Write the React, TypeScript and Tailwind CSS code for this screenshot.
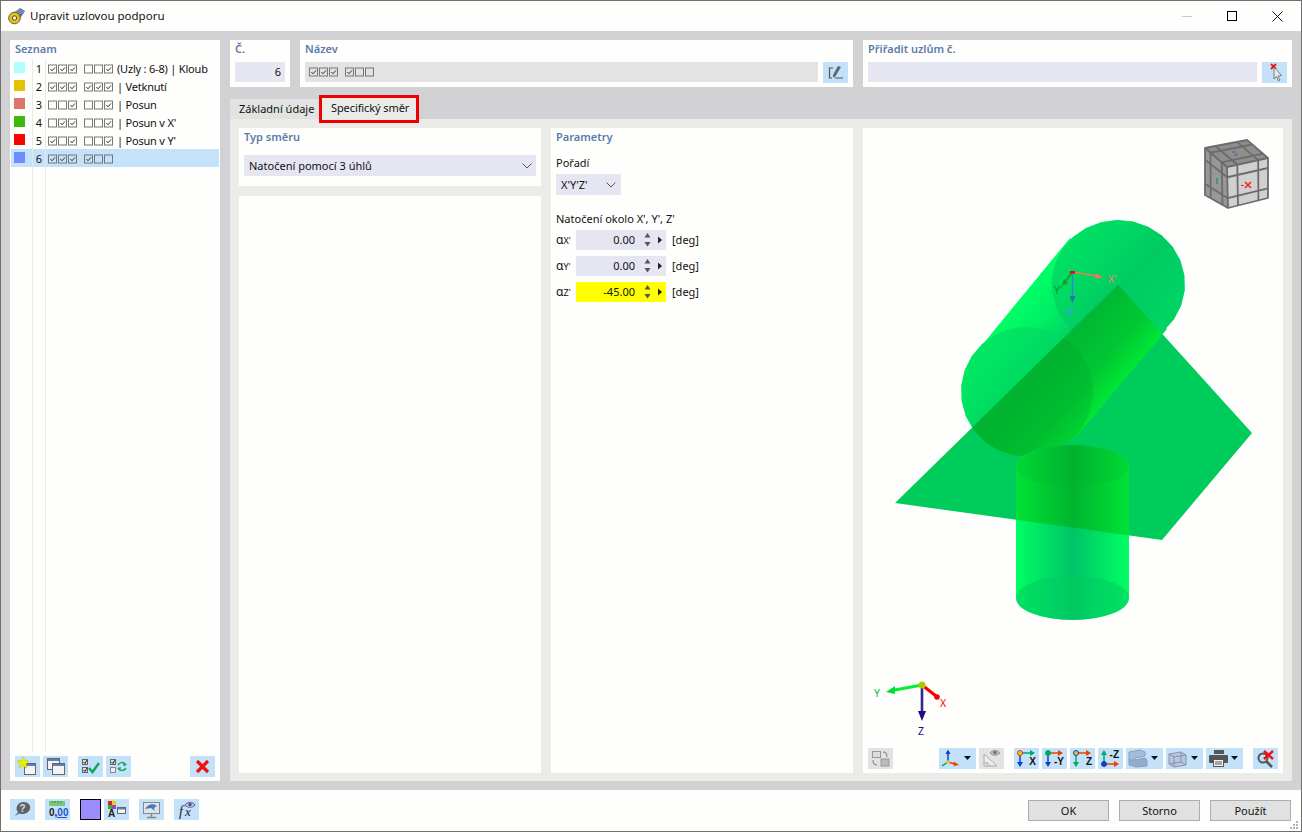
import type { ReactNode } from "react"

const rows = [
    { id: 1, color: "bg-[#b0ffff]", a: "111", b: "001", label: "(Uzly : 6-8) | Kloub" },
    { id: 2, color: "bg-[#e6c300]", a: "111", b: "111", label: "| Vetknutí" },
    { id: 3, color: "bg-[#de7568]", a: "001", b: "001", label: "| Posun" },
    { id: 4, color: "bg-[#3dba08]", a: "011", b: "001", label: "| Posun v X'" },
    { id: 5, color: "bg-[#ff0000]", a: "101", b: "001", label: "| Posun v Y'" },
    { id: 6, color: "bg-[#6d8cff]", a: "111", b: "100", label: "" },
]

const angles = [
    { axis: "X'", value: "0.00", bg: "bg-[#e6e6f2]" },
    { axis: "Y'", value: "0.00", bg: "bg-[#e6e6f2]" },
    { axis: "Z'", value: "-45.00", bg: "bg-[#ffff00]" },
]

type Pt = [number, number]

function ngon(cx: number, cy: number, rx: number, ry: number, n = 26) {
    const pts: string[] = []
    for (let i = 0; i < n; i++) {
        const a = (i / n) * Math.PI * 2 + 0.1
        pts.push(`${(cx + Math.cos(a) * rx).toFixed(1)},${(cy + Math.sin(a) * ry).toFixed(1)}`)
    }
    return pts.join(" ")
}

// grid lines of one view cube face
function faceGrid(p00: Pt, p10: Pt, p11: Pt, p01: Pt) {
    const lerp = (a: Pt, b: Pt, t: number): Pt => [a[0] + (b[0] - a[0]) * t, a[1] + (b[1] - a[1]) * t]
    let d = ""
    for (const t of [0.25, 0.76]) {
        const a = lerp(p00, p10, t), b = lerp(p01, p11, t), c = lerp(p00, p01, t), e = lerp(p10, p11, t)
        d += `M${a[0]} ${a[1]} L${b[0]} ${b[1]} M${c[0]} ${c[1]} L${e[0]} ${e[1]} `
    }
    return d
}

const farCap = ngon(1118.3, 284, 66.7, 64)
const nearCap = ngon(1027, 391.7, 66, 65)

function Box({ on }: { on: boolean }) {
    return (
        <svg width="10" height="10" viewBox="0 0 10 10" className="shrink-0">
            <rect x="0.5" y="1" width="8" height="8" fill="none" stroke="#777" />
            {on && <path d="M2.4 5 L4 6.8 L7 3.4" fill="none" stroke="#333" />}
        </svg>
    )
}

function Boxes({ bits }: { bits: string }) {
    return (
        <div className="flex">
            {bits.split("").map((b, i) => <Box key={i} on={b === "1"} />)}
        </div>
    )
}

function Btn({ children, gray, wide }: { children: ReactNode, gray?: boolean, wide?: boolean }) {
    return (
        <div className={`${wide ? "w-[37px]" : "w-[25px]"} h-[21px] shrink-0 flex items-center ${gray ? "bg-[#e3e3e3]" : "bg-[#c3e1f8]"}`}>
            <svg width="25" height="21" viewBox="0 0 25 21" className="shrink-0">{children}</svg>
            {wide && <svg width="12" height="21" viewBox="0 0 12 21" className="shrink-0"><path d="M0 8 H7 L3.500 12 Z" fill="#111" /></svg>}
        </div>
    )
}

function Win({ x, y, w, h }: { x: number, y: number, w: number, h: number }) {
    return (
        <g>
            <rect x={x + 0.5} y={y + 0.5} width={w} height={h} fill="#f4f4f4" stroke="#666" />
            <rect x={x + 1} y={y + 1} width={w - 1} height="2" fill="#5f7fb5" />
        </g>
    )
}

function AxisIcon({ label, dot, ring, right, down, up }: { label: string, dot: string, ring?: string, right: string, down?: string, up?: string }) {
    const y0 = up ? 16 : 5
    return (
        <g>
            <path d={`M6 ${y0} H17`} stroke={right} strokeWidth="1.5" />
            <path d={`M16 ${y0 - 3} L21 ${y0} L16 ${y0 + 3} Z`} fill={right} />
            {down && <path d="M6 5 V15" stroke={down} strokeWidth="1.5" />}
            {down && <path d="M3 14 L6 19 L9 14 Z" fill={down} />}
            {up && <path d="M6 16 V6" stroke={up} strokeWidth="1.5" />}
            {up && <path d="M3 7 L6 2 L9 7 Z" fill={up} />}
            <circle cx="6" cy={y0} r="2.500" fill={dot} stroke={ring ?? dot} />
            <text x={up ? 21 : 22} y={up ? 10 : 17} textAnchor="end" fontSize="10" fontWeight="700" fill="#111" fontFamily="Liberation Sans, sans-serif">{label}</text>
        </g>
    )
}

function Chevron() {
    return (
        <svg width="10" height="6" viewBox="0 0 10 6"><path d="M0.500 0.500 L5 5 L9.500 0.500" fill="none" stroke="#555" /></svg>
    )
}

function UpperCylinder({ fill }: { fill: string }) {
    return (
        <g fill={fill}>
            <polygon points="1070,238 969,361 1077,436 1167,329" />
            <polygon points={farCap} />
            <polygon points={nearCap} />
        </g>
    )
}

function Scene() {
    const lower = "M1016 466 V598 A56.500 22 0 0 0 1129 598 V466 A56.500 21 0 0 0 1016 466 Z"
    return (
        <svg viewBox="863 128 420 645" className="absolute inset-0 w-full h-full">
            <defs>
                <clipPath id="plate"><polygon points="1118,285 1252,433 1162,540 895,503" /></clipPath>
                <linearGradient id="up1" gradientUnits="userSpaceOnUse" x1="1021" y1="295" x2="1122" y2="381">
                    <stop offset="0" stopColor="#00ff66" />
                    <stop offset="0.25" stopColor="#00ee64" />
                    <stop offset="0.55" stopColor="#00ca64" />
                    <stop offset="0.8" stopColor="#00d864" />
                    <stop offset="1" stopColor="#00e066" />
                </linearGradient>
                <linearGradient id="up2" gradientUnits="userSpaceOnUse" x1="1021" y1="295" x2="1122" y2="381">
                    <stop offset="0" stopColor="#00c838" />
                    <stop offset="0.5" stopColor="#00b833" />
                    <stop offset="0.8" stopColor="#00c833" />
                    <stop offset="1" stopColor="#00e535" />
                </linearGradient>
                <linearGradient id="low1" gradientUnits="userSpaceOnUse" x1="1016" y1="0" x2="1129" y2="0">
                    <stop offset="0" stopColor="#00ff66" />
                    <stop offset="0.12" stopColor="#00f064" />
                    <stop offset="0.5" stopColor="#00c468" />
                    <stop offset="0.85" stopColor="#00ee64" />
                    <stop offset="1" stopColor="#00ff66" />
                </linearGradient>
                <linearGradient id="low2" gradientUnits="userSpaceOnUse" x1="1016" y1="0" x2="1129" y2="0">
                    <stop offset="0" stopColor="#00e236" />
                    <stop offset="0.5" stopColor="#00b52e" />
                    <stop offset="1" stopColor="#00e236" />
                </linearGradient>
            </defs>
            <UpperCylinder fill="url(#up1)" />
            <polygon points={farCap} fill="#00cc62" opacity="0.6" />
            <polygon points={nearCap} fill="#00d860" opacity="0.6" />
            <polygon points="1118,285 1252,433 1162,540 895,503" fill="#00cc5c" />
            <g clipPath="url(#plate)">
                <UpperCylinder fill="url(#up2)" />
                <polygon points={nearCap} fill="#00a428" opacity="0.3" />
            </g>
            <path d={lower} fill="url(#low1)" />
            <g clipPath="url(#plate)">
                <path d={lower} fill="url(#low2)" />
            </g>
            <ellipse cx="1072.500" cy="466" rx="56.500" ry="21" fill="#00a030" opacity="0.14" />
            <ellipse cx="1072.500" cy="598" rx="56.500" ry="22" fill="#00cc60" opacity="0.55" />

            <path d="M1072.500 272 L1098 276" stroke="#f07a5a" strokeWidth="1.500" />
            <path d="M1096 273.500 L1103 277 L1095 279 Z" fill="#f07a5a" />
            <path d="M1072.500 272 L1065 282" stroke="#18a018" strokeWidth="1.500" />
            <path d="M1062 286 L1064 279 L1068 283 Z" fill="#18a018" />
            <path d="M1072.500 272 V297" stroke="#2f86dd" strokeWidth="1.500" />
            <path d="M1069.500 296 H1075.500 L1072.500 303 Z" fill="#2f70b0" />
            <rect x="1070" y="271" width="5" height="2.500" fill="#ff0000" />
            <g fontFamily="Noto Sans, sans-serif" fontSize="10.500">
                <text x="1108" y="283" fill="#f08868">X'</text>
                <text x="1054" y="294" fill="#109030">Y'</text>
                <text x="1067" y="316" fill="#3aa0f0">Z'</text>
            </g>

            <polygon points="1205,148 1247,140 1268,158 1227,167" fill="#8e8e8e" />
            <polygon points="1205,148 1227,167 1228,208 1205,195" fill="#989898" />
            <polygon points="1227,167 1268,158 1268,198 1228,208" fill="#d0d0d0" />
            <g stroke="#6f6b6b" strokeWidth="1.800" fill="none" strokeLinejoin="round">
                <path d="M1205 148 L1247 140 L1268 158 L1268 198 L1228 208 L1205 195 Z M1205 148 L1227 167 L1268 158 M1227 167 L1228 208" />
                <path d={faceGrid([1205, 148], [1247, 140], [1268, 158], [1227, 167])} />
                <path d={faceGrid([1227, 167], [1268, 158], [1268, 198], [1228, 208])} />
                <path d={faceGrid([1205, 148], [1227, 167], [1228, 208], [1205, 195])} />
            </g>
            <path d="M1245 182 L1251 188 M1251 182 L1245 188" stroke="#f02a1a" strokeWidth="1.600" />
            <path d="M1241 185.500 H1244" stroke="#f02a1a" />
            <path d="M1217 178 V184" stroke="#20a050" strokeWidth="1.500" />
            <path d="M1232 152 H1236 M1234 155 H1238" stroke="#505a90" />

            <path d="M922 685 L892 690.500" stroke="#00ee33" strokeWidth="3" />
            <path d="M895 686 L886 692 L895 694 Z" fill="#00dd33" />
            <path d="M922 685 L936 696" stroke="#f00000" strokeWidth="3" />
            <circle cx="937" cy="697" r="2.800" fill="#f00000" />
            <path d="M922 685 V711" stroke="#7a7ab8" strokeWidth="3" />
            <path d="M922 685 V711" stroke="#1c0c88" strokeWidth="1.500" />
            <path d="M918 711 H926 L922 721 Z" fill="#1c0c88" />
            <circle cx="922" cy="685" r="3.500" fill="#b0c800" />
            <g fontFamily="Noto Sans, sans-serif" fontSize="10.500">
                <text x="874" y="697" fill="#00c040">Y</text>
                <text x="940" y="707" fill="#f00000">X</text>
                <text x="918" y="735" fill="#1c0c88">Z</text>
            </g>
        </svg>
    )
}

function App() {
    return (
        <div className="w-[1302px] h-[832px] flex flex-col bg-[#fefefc] border border-[#707070] text-[11px] leading-[16px] text-[#111] font-['Noto_Sans',sans-serif] overflow-hidden">
            {/* title bar */}
            <div className="h-[30px] flex items-center shrink-0 pl-[7px]">
                <svg width="18" height="18" viewBox="0 0 18 18">
                    <path d="M4 7 L12 1 L17 4 L13 10 Z" fill="#55709a" />
                    <path d="M6 6 L12 2 M8 7 L14 3 M10 8 L16 4" stroke="#b8c8dc" strokeWidth="0.700" />
                    <circle cx="6.500" cy="11" r="5.800" fill="#e6c02a" stroke="#6a5a20" />
                    <circle cx="6.500" cy="11" r="2.200" fill="#fff6c0" stroke="#5a4a10" />
                </svg>
                <span className="ml-[4px] text-[11.500px]">Upravit uzlovou podporu</span>
                <div className="ml-auto flex items-center">
                    <div className="w-[10px] h-px bg-[#c8c8c8] mr-[35px]" />
                    <div className="w-[10px] h-[10px] border border-black mr-[35px]" />
                    <svg width="11" height="11" viewBox="0 0 11 11" className="mr-[18px]"><path d="M0.500 0.500 L10.500 10.500 M10.500 0.500 L0.500 10.500" stroke="#111" /></svg>
                </div>
            </div>

            {/* main area */}
            <div className="flex-1 bg-[#d2d2d4] flex gap-[10px] pl-[9px] pr-[9px] pt-[9px] pb-[9px] min-h-0">
                {/* list */}
                <div className="w-[210px] bg-[#fefefc] flex flex-col">
                    <div className="h-[19px] pl-[5px] pt-[1px] font-semibold text-[#5b7bab]">Seznam</div>
                    {rows.map((r) => (
                        <div key={r.id} className={`h-[18px] flex items-center mx-px ${r.id === 6 ? "bg-[#c4e3fb]" : ""}`}>
                            <div className="w-[22px] h-full flex items-center pl-[3px] border-r border-[#e8e8e4]">
                                <div className={`w-[11px] h-[11px] -mt-px ${r.color}`} />
                            </div>
                            <div className="w-[13px] h-full flex items-center justify-end pr-[3px] pt-[2px] border-r border-[#e8e8e4]">{r.id}</div>
                            <div className="h-full flex items-center pl-[2px] pt-[2px]">
                                <Boxes bits={r.a} />
                                <div className="w-[6px]" />
                                <Boxes bits={r.b} />
                                <span className="ml-[3px] whitespace-nowrap tracking-[-0.2px]">{r.label}</span>
                            </div>
                        </div>
                    ))}
                    <div className="flex-1 flex mx-px">
                        <div className="w-[22px] border-r border-[#e8e8e4]" />
                        <div className="w-[13px] border-r border-[#e8e8e4]" />
                    </div>
                    <div className="h-[26px] shrink-0 flex pl-[5px] pt-[5px]">
                        <Btn>
                            <Win x={9} y={7} w={11} h={11} />
                            <polygon points="8,0.500 10,4.500 14,5 11,8 12,12 8,10 4,12 5,8 2,5 6,4.500" fill="#e6f000" stroke="#b8c020" strokeWidth="0.500" />
                        </Btn>
                        <div className="w-[3px]" />
                        <Btn>
                            <Win x={4} y={2} w={12} h={11} />
                            <Win x={9} y={7} w={12} h={11} />
                        </Btn>
                        <div className="w-[10px]" />
                        <Btn>
                            <rect x="4.500" y="3.500" width="5" height="5" fill="#ddd" stroke="#666" />
                            <rect x="4.500" y="11.500" width="5" height="5" fill="#ddd" stroke="#666" />
                            <path d="M5.500 6 L7 7.500 L9 4 M5.500 14 L7 15.500 L9 12" fill="none" stroke="#222" />
                            <path d="M11 12 L14.500 16 L21 7" fill="none" stroke="#10a860" strokeWidth="2.500" />
                        </Btn>
                        <div className="w-[3px]" />
                        <Btn>
                            <rect x="4.500" y="3.500" width="5" height="5" fill="#ddd" stroke="#666" />
                            <rect x="4.500" y="11.500" width="5" height="5" fill="#eee" stroke="#888" />
                            <path d="M5.500 6 L7 7.500 L9 4" fill="none" stroke="#222" />
                            <path d="M12 9 C14 6 17 6 19 8 M20 12 C18 15 15 15 13 13" fill="none" stroke="#10a860" strokeWidth="1.500" />
                            <path d="M18 6 L21 9 L17 10 Z M14 15 L11 12 L15 11 Z" fill="#10a860" />
                        </Btn>
                        <div className="w-[59px]" />
                        <Btn>
                            <path d="M7 5 L18 16 M18 5 L7 16" stroke="#f01010" strokeWidth="3.200" />
                        </Btn>
                    </div>
                    <div className="h-[4px] shrink-0" />
                </div>

                {/* right side */}
                <div className="flex-1 flex flex-col min-w-0">
                    <div className="h-[47px] shrink-0 flex gap-[10px]">
                        <div className="w-[60px] bg-[#fefefc] px-[5px] pt-[1px]">
                            <div className="h-[21px] font-semibold text-[#5b7bab]">Č.</div>
                            <div className="h-[20px] bg-[#e6e6f2] flex items-center justify-end pr-[4px]">6</div>
                        </div>
                        <div className="w-[553px] bg-[#fefefc] px-[5px] pt-[1px]">
                            <div className="h-[21px] font-semibold text-[#5b7bab]">Název</div>
                            <div className="flex gap-[5px]">
                                <div className="flex-1 h-[20px] bg-[#e3e3e3] flex items-center pl-[4px]">
                                    <Boxes bits="111" />
                                    <div className="w-[6px]" />
                                    <Boxes bits="100" />
                                </div>
                                <Btn>
                                    <path d="M10 6 H6.500 V16 H9 M12 16 H20" fill="none" stroke="#555" strokeWidth="1.200" />
                                    <path d="M15 4 L18 5 L12 15 L10 15.500 L10 13 Z" fill="#666" />
                                </Btn>
                            </div>
                        </div>
                        <div className="w-[429px] bg-[#fefefc] px-[5px] pt-[1px]">
                            <div className="h-[21px] font-semibold text-[#5b7bab]">Přiřadit uzlům č.</div>
                            <div className="flex gap-[5px]">
                                <div className="flex-1 h-[20px] bg-[#e6e6f2]" />
                                <Btn>
                                    <path d="M9 2 L14 7 M14 2 L9 7" stroke="#f01010" strokeWidth="1.800" />
                                    <path d="M12 5 V17 L14.500 14.500 L16.500 19 L18 18 L16 14 L19.500 13.500 Z" fill="#e8e8e8" stroke="#666" strokeWidth="0.800" />
                                </Btn>
                            </div>
                        </div>
                    </div>

                    {/* tabs */}
                    <div className="h-[22px] mt-[10px] shrink-0 flex items-end">
                        <div className="w-[89px] h-[20px] pl-[9px] bg-[#e2e2e2] flex items-center whitespace-nowrap">Základní údaje</div>
                        <div className="relative w-[100px] h-[22px] pl-[12px] bg-[#ebece8] flex items-center whitespace-nowrap tracking-[-0.1px]">
                            Specifický směr
                            <div className="absolute left-0 right-0 -top-[2px] -bottom-[4px] border-[3px] border-[#f20000]" />
                        </div>
                    </div>

                    <div className="flex-1 bg-[#ebece8] flex gap-[10px] p-[9px] pb-[8px] min-h-0">
                        <div className="w-[302px] flex flex-col gap-[10px]">
                            <div className="h-[58px] bg-[#fefefc] px-[5px] pt-px">
                                <div className="h-[26px] font-semibold text-[#5b7bab]">Typ směru</div>
                                <div className="h-[21px] bg-[#e6e6f2] flex items-center justify-between pl-[5px] pr-[4px]">
                                    <span>Natočení pomocí 3 úhlů</span>
                                    <Chevron />
                                </div>
                            </div>
                            <div className="flex-1 bg-[#fefefc]" />
                        </div>

                        <div className="w-[302px] bg-[#fefefc] px-[5px] pt-px flex flex-col">
                            <div className="h-[26px] font-semibold text-[#5b7bab]">Parametry</div>
                            <div className="h-[19px]">Pořadí</div>
                            <div className="w-[65px] h-[21px] bg-[#e6e6f2] flex items-center justify-between pl-[5px] pr-[5px]">
                                <span>X'Y'Z'</span>
                                <Chevron />
                            </div>
                            <div className="mt-[16px] h-[19px]">Natočení okolo X', Y', Z'</div>
                            <div className="flex flex-col gap-[6px]">
                                {angles.map((a) => (
                                    <div key={a.axis} className="h-[20px] flex items-center">
                                        <div className="w-[20px] flex items-baseline">
                                            <span className="text-[12px]">α</span><span className="text-[9px]">{a.axis}</span>
                                        </div>
                                        <div className={`w-[90px] h-full flex items-center justify-end ${a.bg}`}>
                                            <span>{a.value}</span>
                                            <svg width="31" height="20" viewBox="0 0 31 20" className="shrink-0">
                                                <path d="M9.500 7.500 L12.500 3 L15.500 7.500 Z M9.500 12 L12.500 16.500 L15.500 12 Z" fill="#555" />
                                                <path d="M23 6.500 L27 10 L23 13.500 Z" fill="#222" />
                                            </svg>
                                        </div>
                                        <span className="ml-[6px]">[deg]</span>
                                    </div>
                                ))}
                            </div>
                        </div>

                        <div className="relative flex-1 bg-[#fefefc] flex flex-col justify-end pb-[4px] pl-[5px] overflow-hidden">
                            <Scene />
                            <div className="relative flex items-center">
                                <Btn gray>
                                    <rect x="4.500" y="3.500" width="8" height="6" fill="#ddd" stroke="#999" />
                                    <rect x="13" y="11" width="8" height="7" fill="#bbb" stroke="#999" />
                                    <path d="M15 4 C18 4 19 6 19 9 M9 17 C6 17 5 15 5 12" fill="none" stroke="#999" strokeWidth="1.300" />
                                </Btn>
                                <div className="w-[46px]" />
                                <Btn wide>
                                    <path d="M9 15 L9 4" stroke="#1040c0" strokeWidth="1.500" />
                                    <path d="M6.500 6 L9 1.500 L11.500 6 Z" fill="#1040c0" />
                                    <path d="M9 14 L16 16" stroke="#f04000" strokeWidth="1.500" />
                                    <path d="M15 13.500 L20 17 L14.500 18 Z" fill="#f04000" />
                                    <path d="M9 14 L3 18" stroke="#00a060" strokeWidth="1.500" />
                                    <circle cx="9" cy="14" r="1.800" fill="#e8d020" />
                                </Btn>
                                <div className="w-[3px]" />
                                <Btn gray>
                                    <path d="M5 18 V6 L18 18 Z M5 15 H9" fill="#eee" stroke="#aaa" />
                                    <path d="M8 18 V14 L12 18 Z" fill="#ddd" stroke="#bbb" />
                                    <path d="M11 5 C13 1.500 19 1.500 21 5 C19 8 13 8 11 5 Z" fill="#bbb" stroke="#999" />
                                    <circle cx="16" cy="4.500" r="1.800" fill="#777" />
                                </Btn>
                                <div className="w-[10px]" />
                                <Btn><AxisIcon label="X" dot="#f0c020" ring="#e04010" right="#00a868" down="#1040c0" /></Btn>
                                <div className="w-[3px]" />
                                <Btn><AxisIcon label="-Y" dot="#00a868" right="#f04000" down="#1040c0" /></Btn>
                                <div className="w-[3px]" />
                                <Btn><AxisIcon label="Z" dot="#f0c020" ring="#1040c0" right="#f04000" down="#00a868" /></Btn>
                                <div className="w-[3px]" />
                                <Btn><AxisIcon label="-Z" dot="#1040c0" right="#f04000" up="#00a868" /></Btn>
                                <div className="w-[3px]" />
                                <Btn wide>
                                    <path d="M3 4 L14 2 L19 4 V8 L9 10 V14 L3 12 Z" fill="#a6bcd8" stroke="#8aa0c0" />
                                    <path d="M9 12 L19 10 L21 12 V18 L10 19 L3 17 V12 Z" fill="#93abcc" stroke="#8aa0c0" />
                                </Btn>
                                <div className="w-[3px]" />
                                <Btn wide>
                                    <path d="M3 6 L15 4 L20 7 V17 L8 19 L3 16 Z" fill="#b4bcd4" fillOpacity="0.7" stroke="#8a90a8" />
                                    <path d="M3 6 L8 9 L20 7 M8 9 V19 M3 16 L15 14 L20 17 M15 4 V14" fill="none" stroke="#8a90a8" />
                                </Btn>
                                <div className="w-[3px]" />
                                <Btn wide>
                                    <rect x="8" y="2" width="10" height="4" fill="#555" />
                                    <rect x="3" y="7" width="19" height="8" rx="1" fill="#555" />
                                    <rect x="7.500" y="11.500" width="10" height="7" fill="#f4f4f4" stroke="#555" />
                                    <path d="M9 14 H16 M9 16 H16" stroke="#555" />
                                </Btn>
                                <div className="w-[10px]" />
                                <Btn>
                                    <circle cx="10" cy="10" r="4.500" fill="none" stroke="#555" strokeWidth="2" />
                                    <path d="M13.500 13.500 L19 19" stroke="#555" strokeWidth="2.500" />
                                    <path d="M11 3 L20 11 M20 3 L11 11" stroke="#f01010" strokeWidth="2.500" />
                                </Btn>
                            </div>
                        </div>
                    </div>
                </div>
            </div>

            {/* bottom bar */}
            <div className="relative h-[41px] shrink-0 flex items-start pt-[9px] pl-[9px]">
                <Btn>
                    <path d="M5 17 L8 13 C4 8 9 3 13.500 3 C18 3 21 6 20 10 C19 14 13 16 9 14.500 Z" fill="#606060" />
                    <text x="12.500" y="13" textAnchor="middle" fontSize="10" fontWeight="700" fill="#c3e1f8" fontFamily="Liberation Sans, sans-serif">?</text>
                </Btn>
                <div className="w-[10px]" />
                <Btn>
                    <rect x="4" y="2" width="16" height="5" fill="#78c878" />
                    <path d="M7 2 V4 M10 2 V4 M13 2 V4 M16 2 V4" stroke="#3a8a3a" />
                    <text x="4" y="17" fontSize="10" fontWeight="700" fill="#222" fontFamily="Liberation Sans, sans-serif">0,<tspan fill="#2a55c8">00</tspan></text>
                    <path d="M12 18.500 H22" stroke="#2a55c8" />
                </Btn>
                <div className="w-[10px]" />
                <div className="w-[21px] h-[21px] bg-[#9d8cff] border border-black" />
                <div className="w-[3px]" />
                <Btn>
                    <rect x="4" y="2" width="4" height="4" fill="#e02020" />
                    <rect x="8" y="2" width="4" height="4" fill="#e6d020" />
                    <rect x="4" y="6" width="4" height="4" fill="#30b030" />
                    <rect x="8" y="6" width="4" height="4" fill="#a040c0" />
                    <text x="4" y="18" fontSize="10" fontWeight="700" fill="#222" fontFamily="Liberation Sans, sans-serif">A</text>
                    <rect x="13.500" y="8.500" width="8" height="6" fill="#f4f4f4" stroke="#666" />
                    <rect x="14" y="9" width="7" height="1.500" fill="#5f7fb5" />
                </Btn>
                <div className="w-[10px]" />
                <Btn>
                    <rect x="4.500" y="3.500" width="16" height="11" fill="#dfe4ea" stroke="#888" />
                    <path d="M6 10 C9 5 14 4 18 7 L15 9 L16 12 L12 9 Z" fill="#4a78b8" />
                    <path d="M12.500 15 V18 M8 18.500 H17" stroke="#888" strokeWidth="1.300" />
                </Btn>
                <div className="w-[10px]" />
                <Btn>
                    <text x="5" y="17" fontSize="14" fontStyle="italic" fill="#222" fontFamily="Liberation Serif, serif">f</text>
                    <text x="11" y="17" fontSize="13" fontStyle="italic" fill="#222" fontFamily="Liberation Serif, serif">x</text>
                    <path d="M11 6 C13 2.500 19 2.500 21 6 C19 9 13 9 11 6 Z" fill="#c8c0e8" stroke="#6a5a9a" />
                    <circle cx="16" cy="5.500" r="1.700" fill="#5a4a8a" />
                </Btn>
                <div className="ml-auto mt-px flex gap-[10px] pr-[10px]">
                    {["OK", "Storno", "Použít"].map((t) => (
                        <div key={t} className="w-[81px] h-[21px] bg-[#e1e1e1] border border-[#adadad] flex items-center justify-center">{t}</div>
                    ))}
                </div>
                <svg width="10" height="10" viewBox="0 0 10 10" className="absolute right-[2px] bottom-[1px]">
                    <path d="M7 1 h2 v2 h-2 Z M4 4 h2 v2 h-2 Z M7 4 h2 v2 h-2 Z M1 7 h2 v2 h-2 Z M4 7 h2 v2 h-2 Z M7 7 h2 v2 h-2 Z" fill="#b4b4b4" />
                </svg>
            </div>
        </div>
    )
}

export default App
